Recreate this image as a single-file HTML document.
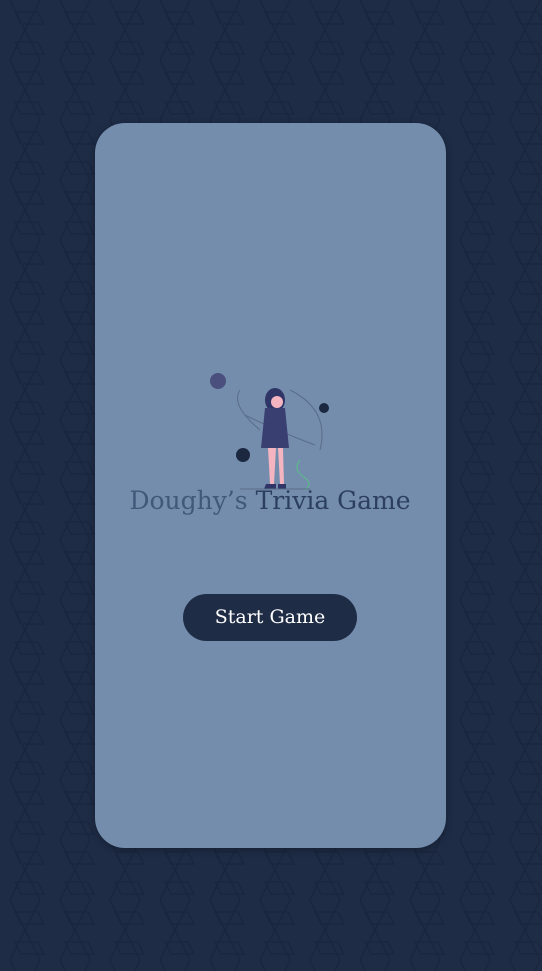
<!DOCTYPE html>
<html><head><style>
html,body{margin:0;padding:0;width:542px;height:971px;overflow:hidden;background:#1e2c46;font-family:"DejaVu Serif",serif}
.bg{position:absolute;left:0;top:0}
.card{position:absolute;left:95px;top:123px;width:351px;height:725px;background:#748dad;border-radius:30px;box-shadow:0 2px 8px rgba(0,0,0,.3)}
.title{position:absolute;left:0;width:540px;top:486px;text-align:center;font-size:25px;color:#2c3f5e;white-space:nowrap}
.title span{color:#41587a}
.btn{position:absolute;left:183px;top:594px;width:174px;height:47px;border-radius:24px;background:#1f2c46;color:#fff;font-size:19px;text-align:center;line-height:47px}
</style></head><body>
<svg class="bg" width="542" height="971"><defs><pattern id="p" width="50" height="60" patternUnits="userSpaceOnUse">
<path d="M10 0 L25 30 L10 60 M40 0 L25 30 L40 60 M15 12 H38 L44 24 H21 Z M15 42 H38 L44 54 H21 Z" fill="none" stroke="#19263e" stroke-width="1.5"/></pattern></defs>
<rect width="542" height="971" fill="url(#p)"/></svg>
<div class="card"></div>
<svg style="position:absolute;left:200px;top:360px" width="220" height="135">
<circle cx="18" cy="21" r="8" fill="#4a4f7e"/><circle cx="43" cy="95" r="7" fill="#1c2740"/><circle cx="124" cy="48" r="5" fill="#1c2740"/>
<path d="M40 30 q-10 15 20 40 M45 55 q30 15 70 30 M90 30 q40 20 30 60" fill="none" stroke="#5a6d88" stroke-width="1"/>
<ellipse cx="75" cy="40" rx="10" ry="12" fill="#2f3566"/><circle cx="77" cy="42" r="6" fill="#f4b4c0"/>
<path d="M65 48 h20 l4 40 h-28 z" fill="#3a3f72"/>
<path d="M68 88 l2 36 h4 l2 -36 z M78 88 l2 36 h4 l-1 -36 z" fill="#f4b4c0"/>
<path d="M66 124 h10 v5 h-12z M78 124 h8 v5 h-8z" fill="#2f3566"/>
<path d="M100 100 q-8 10 5 18 q8 6 0 12" fill="none" stroke="#5cb88a" stroke-width="1.2"/>
<line x1="40" y1="129" x2="110" y2="129" stroke="#5a6d88"/>
</svg>
<div class="title"><span>Doughy’s</span> Trivia Game</div>
<div class="btn">Start Game</div>
</body></html>
